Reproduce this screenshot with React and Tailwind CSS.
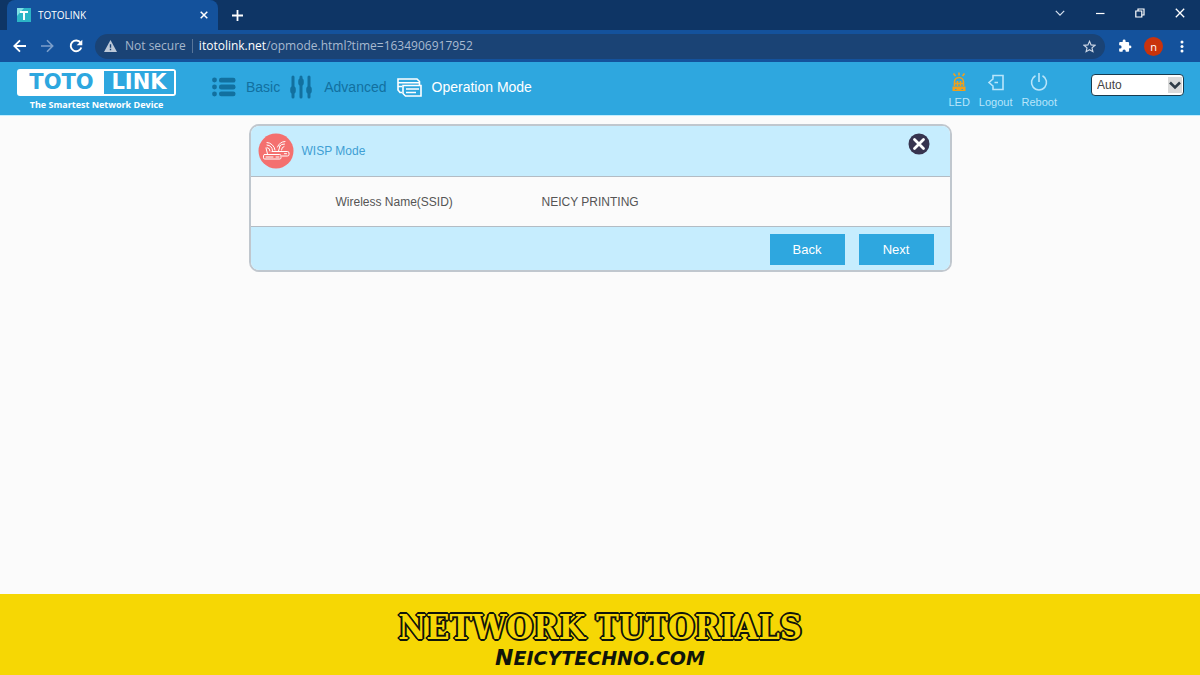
import React from "react";

function BrowserTabs() {
  return (
    <div className="flex h-[30px] items-center justify-between bg-[#0e3565] pl-[7px] text-white">
      <div className="flex h-full items-center">
        <div className="flex h-full w-[211px] items-center rounded-t-lg bg-[#14529c] pr-[6px] pl-[10px]">
          <svg width="14" height="14" viewBox="0 0 14 14" aria-hidden="true">
            <rect width="14" height="14" fill="#2cb5c6" />
            <path d="M0 0h7L0 8z" fill="#7fe0e4" />
            <path d="M3 4h8M7 4v8" stroke="#fff" strokeWidth="2" />
          </svg>
          <span className="ml-[7px] flex-1 font-['Open_Sans','Noto_Sans',sans-serif] text-[10px]">TOTOLINK</span>
          <button aria-label="Close tab" className="flex h-4 w-4 items-center justify-center">
            <svg width="8" height="8" viewBox="0 0 8 8" stroke="#fff" strokeWidth="1.5">
              <path d="M.7.7l6.6 6.6M7.3.7L.7 7.3" />
            </svg>
          </button>
        </div>
        <button aria-label="New tab" className="ml-[13px] flex h-3 w-3 items-center justify-center">
          <svg width="11" height="11" viewBox="0 0 11 11" stroke="#fff" strokeWidth="1.8">
            <path d="M5.500 0v11M0 5.500h11" />
          </svg>
        </button>
      </div>
      <div className="flex h-[25px] items-center gap-[30px] self-start pr-[15px]">
        <button aria-label="Search tabs">
          <svg width="10" height="10" viewBox="0 0 10 10" fill="none" stroke="#d5e0ee" strokeWidth="1.2">
            <path d="M.8 2.800L5 7.200l4.200-4.400" />
          </svg>
        </button>
        <button aria-label="Minimize">
          <svg width="10" height="10" viewBox="0 0 10 10" stroke="#fff" strokeWidth="1.2">
            <path d="M1 5.500h8.500" />
          </svg>
        </button>
        <button aria-label="Restore">
          <svg width="10" height="10" viewBox="0 0 10 10" fill="none" stroke="#fff" strokeWidth="1.2">
            <path d="M.8 3h6v6h-6zM3 3V1h6v6H7" />
          </svg>
        </button>
        <button aria-label="Close window">
          <svg width="10" height="10" viewBox="0 0 10 10" stroke="#fff" strokeWidth="1.3">
            <path d="M.8.800l8.400 8.400M9.200.800L.8 9.200" />
          </svg>
        </button>
      </div>
    </div>
  );
}

function AddressBar() {
  return (
    <div className="flex h-8 items-center bg-[#14529c] pr-4 pl-[13px] font-['Open_Sans','Noto_Sans',sans-serif]">
      <div className="flex items-center gap-[15px]">
        <button aria-label="Back in history">
          <svg width="13" height="14" viewBox="0 0 13 14" fill="none" stroke="#fff" strokeWidth="1.8">
            <path d="M13 7H1.500M7 1.300L1.300 7 7 12.700" />
          </svg>
        </button>
        <button aria-label="Forward in history">
          <svg width="13" height="14" viewBox="0 0 13 14" fill="none" stroke="#7c9fcb" strokeWidth="1.600">
            <path d="M0 7h11.500M6 1.300L11.700 7 6 12.700" />
          </svg>
        </button>
        <button aria-label="Reload">
          <svg width="14" height="14" viewBox="0 0 14 14" fill="none">
            <path d="M11.600 3.800A5.400 5.400 0 1 0 12.300 8.500" stroke="#fff" strokeWidth="1.900" />
            <path d="M13.300.700v5.600H7.700z" fill="#fff" />
          </svg>
        </button>
      </div>
      <div className="ml-3 flex h-[25px] flex-1 items-center rounded-full bg-[#1a4375] pr-[9px] pl-[9px] text-[12px]">
        <svg width="13" height="12" viewBox="0 0 13 12" aria-hidden="true">
          <path d="M6.500 0L13 12H0z" fill="#bdc9d8" />
          <path d="M6.500 4.200v3.600M6.500 8.800v1.500" stroke="#1a4375" strokeWidth="1.400" />
        </svg>
        <span className="ml-2 text-[#a6b7cc]">Not secure</span>
        <span className="ml-[6px] h-[14px] w-px bg-[#587599]" />
        <a href="#page" className="ml-[6px] flex-1 text-[#a9bad0]">
          <span className="text-white">itotolink.net</span>/opmode.html?time=1634906917952
        </a>
        <button aria-label="Bookmark this page">
          <svg width="13" height="13" viewBox="0 0 24 24" fill="none" stroke="#cbd6e5" strokeWidth="2.200">
            <path d="M12 2.500l2.900 6.600 7.100.700-5.400 4.700 1.600 7L12 17.800 5.800 21.500l1.600-7L2 9.800l7.100-.700z" />
          </svg>
        </button>
      </div>
      <button aria-label="Extensions" className="ml-[13px]">
        <svg width="14" height="14" viewBox="0 0 24 24" fill="#fff">
          <path d="M20.500 11H19V7c0-1.100-.9-2-2-2h-4V3.500a2.500 2.500 0 0 0-5 0V5H4c-1.100 0-2 .9-2 2v3.800h1.500a2.700 2.700 0 0 1 0 5.400H2V20c0 1.100.9 2 2 2h3.800v-1.500a2.700 2.700 0 0 1 5.400 0V22H17c1.100 0 2-.9 2-2v-4h1.500a2.500 2.500 0 0 0 0-5z" />
        </svg>
      </button>
      <button className="ml-3 h-[19px] w-[19px] rounded-full bg-[#c9330c] text-[11px] leading-[17px] text-white">n</button>
      <button aria-label="Browser menu" className="ml-[17px]">
        <svg width="4" height="13" viewBox="0 0 4 13" fill="#fff">
          <circle cx="2" cy="2" r="1.500" />
          <circle cx="2" cy="6.500" r="1.500" />
          <circle cx="2" cy="11" r="1.500" />
        </svg>
      </button>
    </div>
  );
}

function Logo() {
  return (
    <a href="#home" className="flex w-[159px] flex-col items-center">
      <span className="flex h-[27px] w-full rounded-[3px] bg-white p-[2px] font-['DejaVu_Sans',sans-serif] text-[21px] leading-[23px] font-bold">
        <span className="flex-1 text-center text-[#2ea7df]">TOTO</span>
        <span className="w-[70px] bg-[#2ea7df] text-center text-white">LINK</span>
      </span>
      <span className="mt-[2px] font-['Open_Sans','Noto_Sans',sans-serif] text-[9px] leading-[13px] font-bold text-white">
        The Smartest Network Device
      </span>
    </a>
  );
}

function ListIcon() {
  return (
    <svg width="24" height="20" viewBox="0 0 24 20" fill="#12709f" aria-hidden="true">
      <circle cx="2.500" cy="3" r="2.400" />
      <circle cx="2.500" cy="10" r="2.400" />
      <circle cx="2.500" cy="17" r="2.400" />
      <rect x="7" y=".7" width="16.500" height="4.900" rx="2.200" />
      <rect x="7" y="7.500" width="16.500" height="4.900" rx="2.200" />
      <rect x="7" y="14.400" width="16.500" height="4.900" rx="2.200" />
    </svg>
  );
}

function SlidersIcon() {
  return (
    <svg width="22" height="24" viewBox="0 0 22 24" stroke="#12709f" strokeLinecap="round" aria-hidden="true">
      <path d="M3 2v20M11 2v20M19 2v20" strokeWidth="3" />
      <path d="M3 14v2M11 6v2M19 14v2" strokeWidth="5.500" />
    </svg>
  );
}

function ModeIcon() {
  return (
    <svg width="25" height="19" viewBox="0 0 25 19" fill="none" stroke="#fff" strokeWidth="1.600" aria-hidden="true">
      <path d="M5 14.500H3L1 12V1h19l2.500 2.500V7M1 4.800h21.500M1 8.500h4" />
      <path d="M6 7.500h18V18H8.500L6 15.500z" />
      <path d="M9 11h6M12 11h10M9 14.500h10" />
    </svg>
  );
}

function Header() {
  return (
    <header className="flex h-[54px] items-start border-b border-[#c3eeff] bg-[#2ea7df] pt-[7px] pr-4 pl-[17px] font-['Liberation_Sans',Arial,sans-serif]">
      <Logo />
      <nav className="ml-9 flex h-9 flex-1 items-center text-[14px] text-[#12709f]">
        <a href="#basic" className="flex items-center gap-[10px]">
          <ListIcon />
          Basic
        </a>
        <a href="#advanced" className="ml-[10px] flex items-center gap-3">
          <SlidersIcon />
          Advanced
        </a>
        <a href="#mode" className="ml-[10px] flex items-center gap-[10px] text-white">
          <ModeIcon />
          Operation Mode
        </a>
      </nav>
      <div className="flex items-end gap-[9px] pt-[3px] text-[11px] leading-[13px] text-[#b9e5fa]">
        <button className="flex flex-col items-center gap-1">
          <svg width="18" height="20" viewBox="0 0 18 20" fill="none" stroke="#efa01c" strokeWidth="1.600">
            <path d="M9 .5v3M3.500 1.500L5.500 4M14.500 1.500l-2 2.500M4.500 14v-4a4.500 4.500 0 0 1 9 0v4M7.500 9v5M10.500 9v5M5 11.500h8" />
            <path d="M2.500 14.500h13V19h-13z" fill="#efa01c" stroke="none" />
            <path d="M5 17.500h1.500M11.500 17.500H13" stroke="#2ea7df" strokeWidth="1" />
          </svg>
          LED
        </button>
        <button className="flex flex-col items-center gap-1">
          <svg width="18" height="20" viewBox="0 0 18 20" fill="none" stroke="#b9e5fa" strokeWidth="1.600">
            <path d="M6 6.500V3.500h10v14H6v-3" />
            <path d="M11 10.500H7.500M6.500 6.500L2 10.500l4.500 4" />
          </svg>
          Logout
        </button>
        <button className="flex flex-col items-center gap-1">
          <svg width="18" height="20" viewBox="0 0 18 20" fill="none" stroke="#b9e5fa" strokeWidth="1.600">
            <path d="M5.500 3.800a7.500 7.500 0 1 0 7 0M9 1v9" />
          </svg>
          Reboot
        </button>
      </div>
      <div className="relative mt-[5px] ml-[34px] w-[93px]">
        <select
          aria-label="Language"
          className="block h-[22px] w-full appearance-none rounded-[4px] border border-[#173c50] bg-white pl-[5px] text-[12px] text-[#444]"
        >
          <option>Auto</option>
        </select>
        <span className="pointer-events-none absolute top-[3px] right-[2px] flex h-4 w-[14px] items-center justify-center bg-[#dadada]">
          <svg width="12" height="9" viewBox="0 0 12 9" fill="none" stroke="#2f3b46" strokeWidth="2.600">
            <path d="M1 1.500l5 5 5-5" />
          </svg>
        </span>
      </div>
    </header>
  );
}

function WispIcon() {
  return (
    <svg width="36" height="36" viewBox="0 0 36 36" fill="none" stroke="#fff" strokeLinecap="round" aria-hidden="true">
      <circle cx="18" cy="18" r="17.500" fill="#f4706f" stroke="none" />
      <g strokeWidth="1">
        <rect x="5.500" y="21.500" width="17.500" height="4.500" rx="1.200" />
        <path d="M14 18.500h15.500a1.500 1.500 0 0 1 1.500 1.500v1.500a1.500 1.500 0 0 1-1.500 1.500H24" />
        <path d="M8 24h7M18 24h3M26.500 20.700h2M9.500 21l-1.500-6M20.500 18l1.500-5" />
        <path d="M9 14.500a3.500 3.500 0 0 1 3 3.500M9 12a6 6 0 0 1 5.500 5.500M9 9.500a8.500 8.500 0 0 1 8 7.500M26 13.500a3.500 3.500 0 0 0-2.500 3.500M26.500 11a6 6 0 0 0-5 2M27 8.500a8.500 8.500 0 0 0-7.500 5.500" />
      </g>
    </svg>
  );
}

function WispCard() {
  return (
    <section className="mx-auto w-[703px] max-w-full overflow-hidden rounded-[10px] border-2 border-[#c0c7ce] bg-[#fbfbfb] text-[12px] text-[#555]">
      <div className="flex h-[51px] items-start justify-between border-b border-[#b3bcc4] bg-[#c6edfe] pt-[7px] pr-5 pl-[7px]">
        <div className="flex items-center gap-2">
          <WispIcon />
          <h1 className="text-[#409fd4]">WISP Mode</h1>
        </div>
        <button aria-label="Close">
          <svg width="22" height="22" viewBox="0 0 22 22">
            <circle cx="11" cy="11" r="10.500" fill="#37344f" />
            <path d="M6.500 6.500l9 9M15.500 6.500l-9 9" stroke="#fff" strokeWidth="2.800" strokeLinecap="round" />
          </svg>
        </button>
      </div>
      <dl className="flex h-[49px] items-center pl-[85px]">
        <dt className="w-[206px]">Wireless Name(SSID)</dt>
        <dd>NEICY PRINTING</dd>
      </dl>
      <div className="flex h-11 items-end justify-end gap-[14px] border-t border-[#b3bcc4] bg-[#c6edfe] pr-4 pb-[5px] text-[13px] text-white">
        <button className="h-[31px] w-[75px] bg-[#2ea7df]">Back</button>
        <button className="h-[31px] w-[75px] bg-[#2ea7df]">Next</button>
      </div>
    </section>
  );
}

export default function App() {
  return (
    <div className="flex min-h-screen flex-col bg-[#fbfbfb]">
      <BrowserTabs />
      <AddressBar />
      <Header />
      <main className="flex-1 pt-2 font-['Liberation_Sans',Arial,sans-serif]">
        <WispCard />
      </main>
      <footer className="flex h-[81px] flex-col items-center bg-[#f6d704] pt-[14px] text-[#10150a]">
        <h2 className="font-['DejaVu_Serif_Condensed','DejaVu_Serif',serif] text-[34px] leading-[38px] font-bold text-[#f6d704] [text-shadow:2px_0_#10150a,-2px_0_#10150a,0_2px_#10150a,0_-2px_#10150a,1px_1px_#10150a,-1px_1px_#10150a,1px_-1px_#10150a,-1px_-1px_#10150a]">
          NETWORK TUTORIALS
        </h2>
        <p className="font-['DejaVu_Sans',sans-serif] text-[19px] leading-[24px] font-bold uppercase italic">
          <span className="text-[22px]">N</span>eicytechno.com
        </p>
      </footer>
    </div>
  );
}
